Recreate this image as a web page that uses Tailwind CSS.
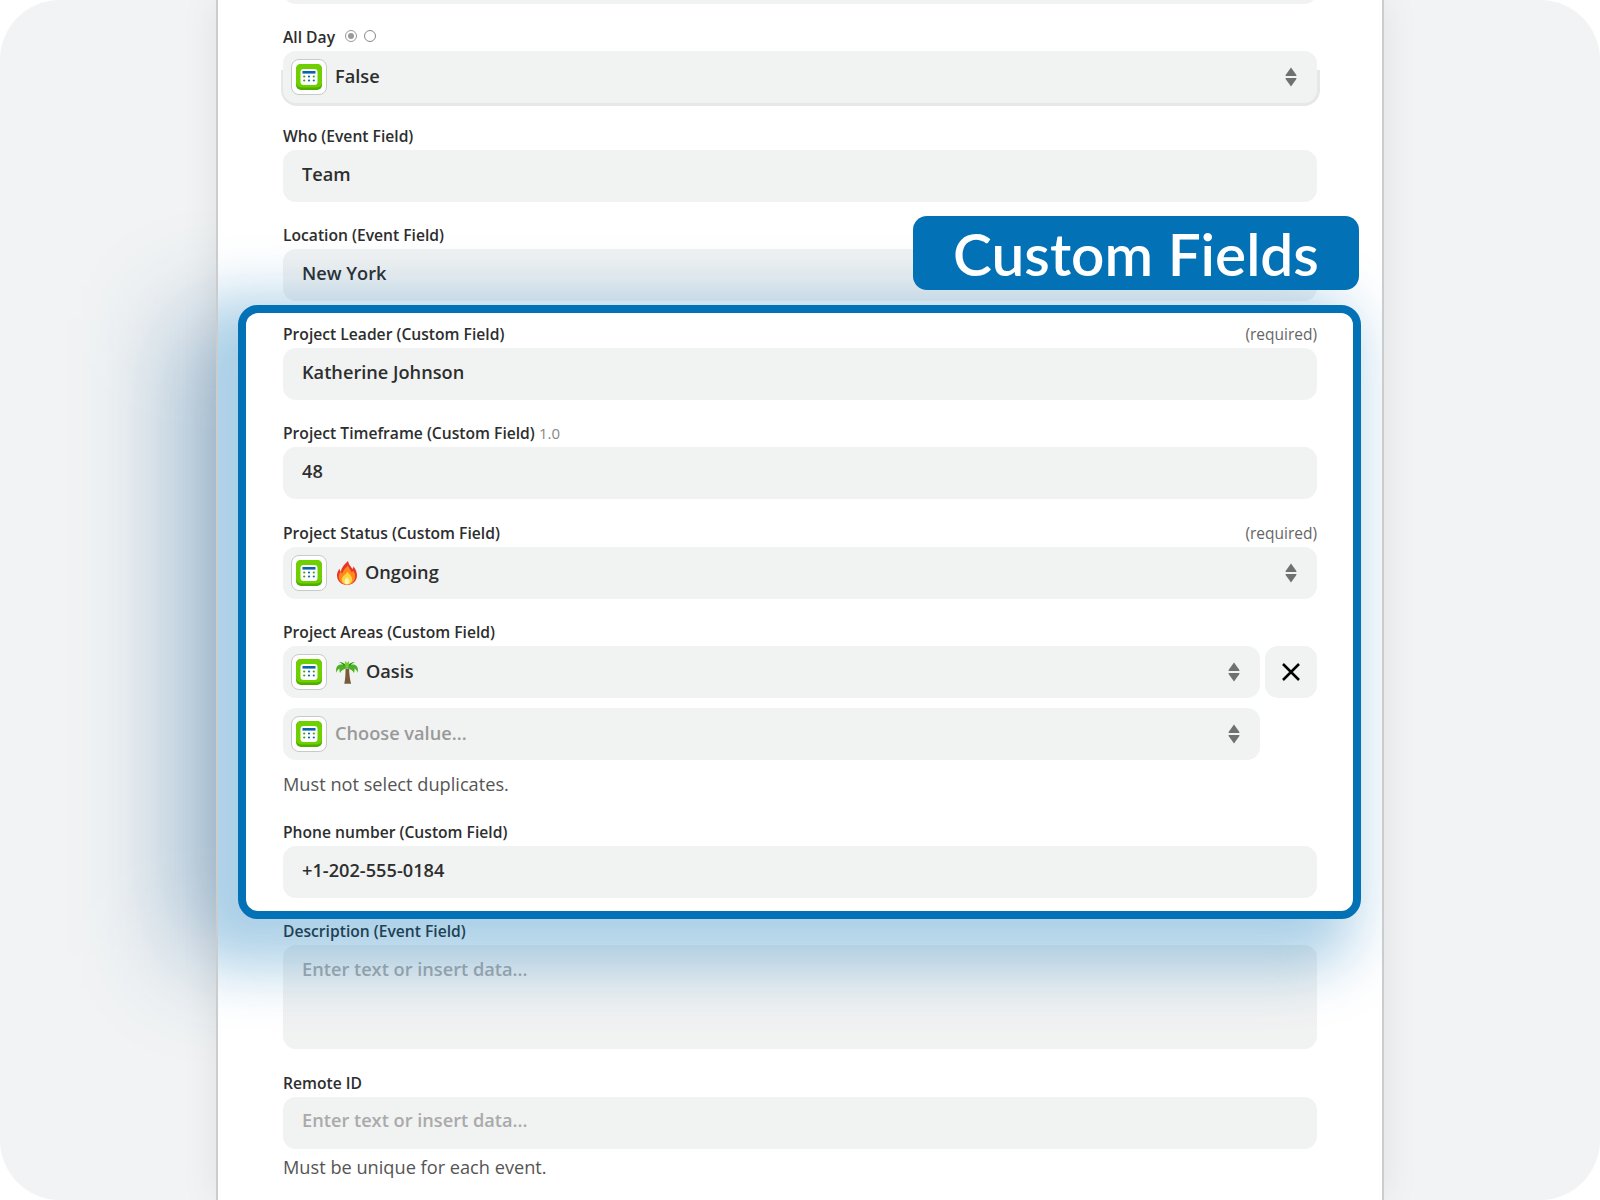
<!DOCTYPE html>
<html lang="en">
<head>
<meta charset="utf-8">
<title>Custom Fields</title>
<script src="https://cdn.jsdelivr.net/npm/@tailwindcss/browser@4"></script>
</head>
<body class="bg-white">
<svg width="0" height="0" class="absolute">
  <defs>
    <symbol id="cal" viewBox="0 0 26 26">
      <rect x="0" y="0" width="26" height="26" rx="5" fill="#4fae00"/>
      <rect x="0" y="0" width="26" height="23.500" rx="5" fill="#6fd000"/>
      <rect x="4.500" y="5" width="17" height="16" rx="3" fill="#fff"/>
      <rect x="6.500" y="7" width="13" height="2.600" fill="#0b62ad"/>
      <g fill="#3aa800"><circle cx="8.200" cy="12.500" r="1.100"/><circle cx="17.800" cy="12.500" r="1.100"/><circle cx="8.200" cy="16.500" r="1.100"/></g>
      <g fill="#1566b5"><circle cx="13" cy="12.500" r="1.100"/><circle cx="13" cy="16.500" r="1.100"/><circle cx="17.800" cy="16.500" r="1.100"/></g>
    </symbol>
    <symbol id="updown" viewBox="0 0 12 20">
      <path d="M6 .6 11.400 8a.6.6 0 0 1-.5.9H1.100A.6.6 0 0 1 .6 8z" fill="#707070"/>
      <path d="M6 19.400.6 12a.6.6 0 0 1 .5-.9h9.800a.6.6 0 0 1 .5.9z" fill="#707070"/>
    </symbol>
  </defs>
</svg>
<div class="relative w-[1600px] h-[1200px] overflow-hidden rounded-[60px] bg-[#f1f3f4] flex justify-center font-['Open_Sans',sans-serif] text-[#2d2e2e]">
  <div class="absolute left-[180px] top-[318px] w-[700px] h-[637px] bg-[rgba(2,80,140,0.37)] blur-[50px]"></div>
  <main class="relative w-[1168px] h-[1200px] overflow-hidden bg-white border-x-2 border-[#cacccd] shadow-[0_0_36px_rgba(0,0,0,0.08)] px-[65px]">
    <div class="flex flex-col gap-[23px] -mt-[48px]">
      <div class="h-[52px] rounded-[13px] bg-[#f1f2f2] shrink-0"></div>

      <div>
        <div class="flex items-center h-5 mb-1 gap-[10px]">
          <span class="text-[15.650px] leading-5 font-semibold">All Day</span>
          <span class="flex gap-[6.500px] -mt-[2px]">
            <span class="w-3 h-3 rounded-full border border-[#999] flex items-center justify-center"><span class="w-[6px] h-[6px] rounded-full bg-[#999]"></span></span>
            <span class="w-3 h-3 rounded-full border border-[#888]"></span>
          </span>
        </div>
        <div class="relative">
          <div class="absolute -left-[2px] -right-[3px] top-[19px] -bottom-[3px] rounded-b-[16px] bg-[#e6e8e8]"></div>
          <div class="relative h-[52px] rounded-[13px] bg-[#f1f2f2] flex items-center pl-2 pr-5">
            <span class="w-9 h-9 rounded-[8px] bg-white border border-[#c9c9c9] flex items-center justify-center shrink-0"><svg class="w-[26px] h-[26px]"><use href="#cal"/></svg></span>
            <span class="ml-2 text-[18.200px] font-semibold">False</span>
            <svg class="ml-auto w-[12px] h-[20px]"><use href="#updown"/></svg>
          </div>
        </div>
      </div>

      <div>
        <div class="h-5 mb-1 text-[15.650px] leading-5 font-semibold">Who (Event Field)</div>
        <div class="h-[52px] rounded-[13px] bg-[#f1f2f2] flex items-center pl-[19px] pb-[2px] text-[18.200px] font-semibold">Team</div>
      </div>

      <div>
        <div class="h-5 mb-1 text-[15.650px] leading-5 font-semibold">Location (Event Field)</div>
        <div class="h-[52px] rounded-[13px] bg-[#f1f2f2] flex items-center pl-[19px] pb-[2px] text-[18.200px] font-semibold">New York</div>
      </div>

      <section class="relative z-10 -mt-[19px] -mr-[44px] -ml-[45px] border-[8px] border-[#0271b5] rounded-[20px] bg-white pt-[11px] pb-[13px] pl-[37px] pr-[36px] shadow-[-34px_21px_60px_28px_rgba(2,113,181,0.33)]">
        <div class="absolute -top-[97px] -right-[6px] w-[446px] h-[74px] rounded-[14px] bg-[#0271b5] flex items-center justify-center font-['Lato',sans-serif] font-semibold text-[58.500px] leading-none text-white">Custom Fields</div>

        <div class="h-5 mb-1 text-[15.650px] leading-5 font-semibold flex justify-between"><span>Project Leader (Custom Field)</span><span class="font-normal text-[15.500px] text-[#666]">(required)</span></div>
        <div class="h-[52px] rounded-[13px] bg-[#f1f2f2] flex items-center pl-[19px] pb-[2px] text-[18.200px] font-semibold">Katherine Johnson</div>

        <div class="h-5 mt-[23px] mb-1 text-[15.650px] leading-5 font-semibold">Project Timeframe (Custom Field) <span class="font-medium text-[15px] text-[#888]">1.0</span></div>
        <div class="h-[52px] rounded-[13px] bg-[#f1f2f2] flex items-center pl-[19px] pb-[2px] text-[18.200px] font-semibold">48</div>

        <div class="h-5 mt-[24px] mb-1 text-[15.650px] leading-5 font-semibold flex justify-between"><span>Project Status (Custom Field)</span><span class="font-normal text-[15.500px] text-[#666]">(required)</span></div>
        <div class="h-[52px] rounded-[13px] bg-[#f1f2f2] flex items-center pl-2 pr-5">
          <span class="w-9 h-9 rounded-[8px] bg-white border border-[#c9c9c9] flex items-center justify-center shrink-0"><svg class="w-[26px] h-[26px]"><use href="#cal"/></svg></span>
          <svg class="ml-[10px] w-[20px] h-[24px]" viewBox="0 0 20 24">
            <path d="M11 0c.6 3.500 3 5.500 4.500 8 .7-.8 1-1.800.9-2.800C18.700 8 20 11.300 20 14.500 20 20 15.500 24 10 24S0 20 0 14.500c0-2.800 1-4.700 2.500-6.800.2 1.200.6 2.200 1.500 3C4.300 6.500 7.500 3.500 11 0z" fill="#e8342a"/>
            <path d="M11 4.500c.6 2.800 2.700 4.700 3.900 7 .6-.5.9-1.200 1-1.900 1.500 2 2.300 3.700 2.300 5.800 0 4.500-3.600 8-8.200 8s-8.200-3.500-8.200-7.600c0-2.300.9-3.800 2.200-5.400.3 1 .7 1.700 1.400 2.200C5.800 9.500 8.500 7 11 4.500z" fill="#ff8a1c"/>
            <path d="M10.500 10.500c.5 2 4.700 4 4.700 8 0 3-2.300 5-5.200 5s-5.200-2-5.200-5c0-3.500 4.500-5 5.700-8z" fill="#ffd23f"/>
            <path d="M10 16c.4 1.300 2.400 2.300 2.400 4.300 0 1.700-1.100 2.900-2.400 2.900s-2.400-1.200-2.400-2.900c0-1.900 1.700-3 2.400-4.300z" fill="#fff3b8"/>
          </svg>
          <span class="ml-2 text-[18.200px] font-semibold">Ongoing</span>
          <svg class="ml-auto w-[12px] h-[20px]"><use href="#updown"/></svg>
        </div>

        <div class="h-5 mt-[23px] mb-1 text-[15.650px] leading-5 font-semibold">Project Areas (Custom Field)</div>
        <div class="flex gap-[5px]">
          <div class="flex-1 h-[52px] rounded-[13px] bg-[#f1f2f2] flex items-center pl-2 pr-5">
            <span class="w-9 h-9 rounded-[8px] bg-white border border-[#c9c9c9] flex items-center justify-center shrink-0"><svg class="w-[26px] h-[26px]"><use href="#cal"/></svg></span>
            <svg class="ml-[9px] w-[22px] h-[24px]" viewBox="0 0 22 24">
              <path d="M9.500 8.500h3.600c.1 5.500.8 10.700 2 15.300H8.300C9.200 19 9.700 14 9.500 8.500z" fill="#7a5a3a"/>
              <path d="M11 8C8.800 4.200 4.500 3.500 1.500 6 .2 7.200-.2 9.200.2 12.700c.9-2.200 2-3.500 3.400-4.200-.3 1.800-.1 3.100.5 4.500C5.200 10.600 7.500 9.200 11 8z" fill="#4cb224"/>
              <path d="M11 8c2.200-3.800 6.500-4.500 9.500-2 1.300 1.200 1.700 3.200 1.300 6.700-.9-2.200-2-3.500-3.400-4.200.3 1.800.1 3.100-.5 4.500C16.800 10.600 14.500 9.200 11 8z" fill="#4cb224"/>
              <path d="M11 8C10 4 6.800 1.700 2.800 2.300 5.500 3 6.800 4.200 7.300 5.500 9 5.800 10 6.700 11 8zM11 8c1-4 4.200-6.300 8.200-5.700C16.500 3 15.200 4.200 14.700 5.500 13 5.800 12 6.700 11 8z" fill="#2f8f16"/>
              <path d="M11 8C8.800 6.200 8.300 3 9.500.8 10.200 2.500 11 3 11 3s.800-.5 1.500-2.200C13.700 3 13.200 6.200 11 8z" fill="#6fd02f"/>
            </svg>
            <span class="ml-2 text-[18.200px] font-semibold">Oasis</span>
            <svg class="ml-auto w-[12px] h-[20px]"><use href="#updown"/></svg>
          </div>
          <div class="w-[52px] h-[52px] rounded-[13px] bg-[#f1f2f2] flex items-center justify-center">
            <svg class="w-[18px] h-[18px]" viewBox="0 0 18 18" fill="none" stroke="#000" stroke-width="2.500"><path d="M1 1l16 16M17 1 1 17"/></svg>
          </div>
        </div>
        <div class="mt-[10px] mr-[57px] h-[52px] rounded-[13px] bg-[#f1f2f2] flex items-center pl-2 pr-5">
          <span class="w-9 h-9 rounded-[8px] bg-white border border-[#c9c9c9] flex items-center justify-center shrink-0"><svg class="w-[26px] h-[26px]"><use href="#cal"/></svg></span>
          <span class="ml-2 text-[18.200px] font-semibold text-[#999]">Choose value...</span>
          <svg class="ml-auto w-[12px] h-[20px]"><use href="#updown"/></svg>
        </div>
        <p class="mt-[12px] h-6 text-[18.200px] leading-6 text-[#555]">Must not select duplicates.</p>

        <div class="h-5 mt-[26px] mb-1 text-[15.650px] leading-5 font-semibold">Phone number (Custom Field)</div>
        <div class="h-[52px] rounded-[13px] bg-[#f1f2f2] flex items-center pl-[19px] pb-[3px] text-[18.200px] font-semibold">+1-202-555-0184</div>
      </section>

      <div class="-mt-[21px]">
        <div class="h-5 mb-[4px] text-[15.650px] leading-5 font-semibold">Description (Event Field)</div>
        <div class="h-[104px] rounded-[13px] bg-[#f1f2f2] pl-[19px] pt-[12px] text-[18.200px] leading-6 font-semibold text-[#aaa]">Enter text or insert data...</div>
      </div>

      <div class="mt-px">
        <div class="h-5 mb-1 text-[15.650px] leading-5 font-semibold">Remote ID</div>
        <div class="h-[52px] rounded-[13px] bg-[#f1f2f2] flex items-center pl-[19px] pb-[4px] text-[18.200px] font-semibold text-[#aaa]">Enter text or insert data...</div>
        <p class="mt-[6px] h-6 text-[18.200px] leading-6 text-[#555]">Must be unique for each event.</p>
      </div>
    </div>
  </main>
</div>
</body>
</html>
